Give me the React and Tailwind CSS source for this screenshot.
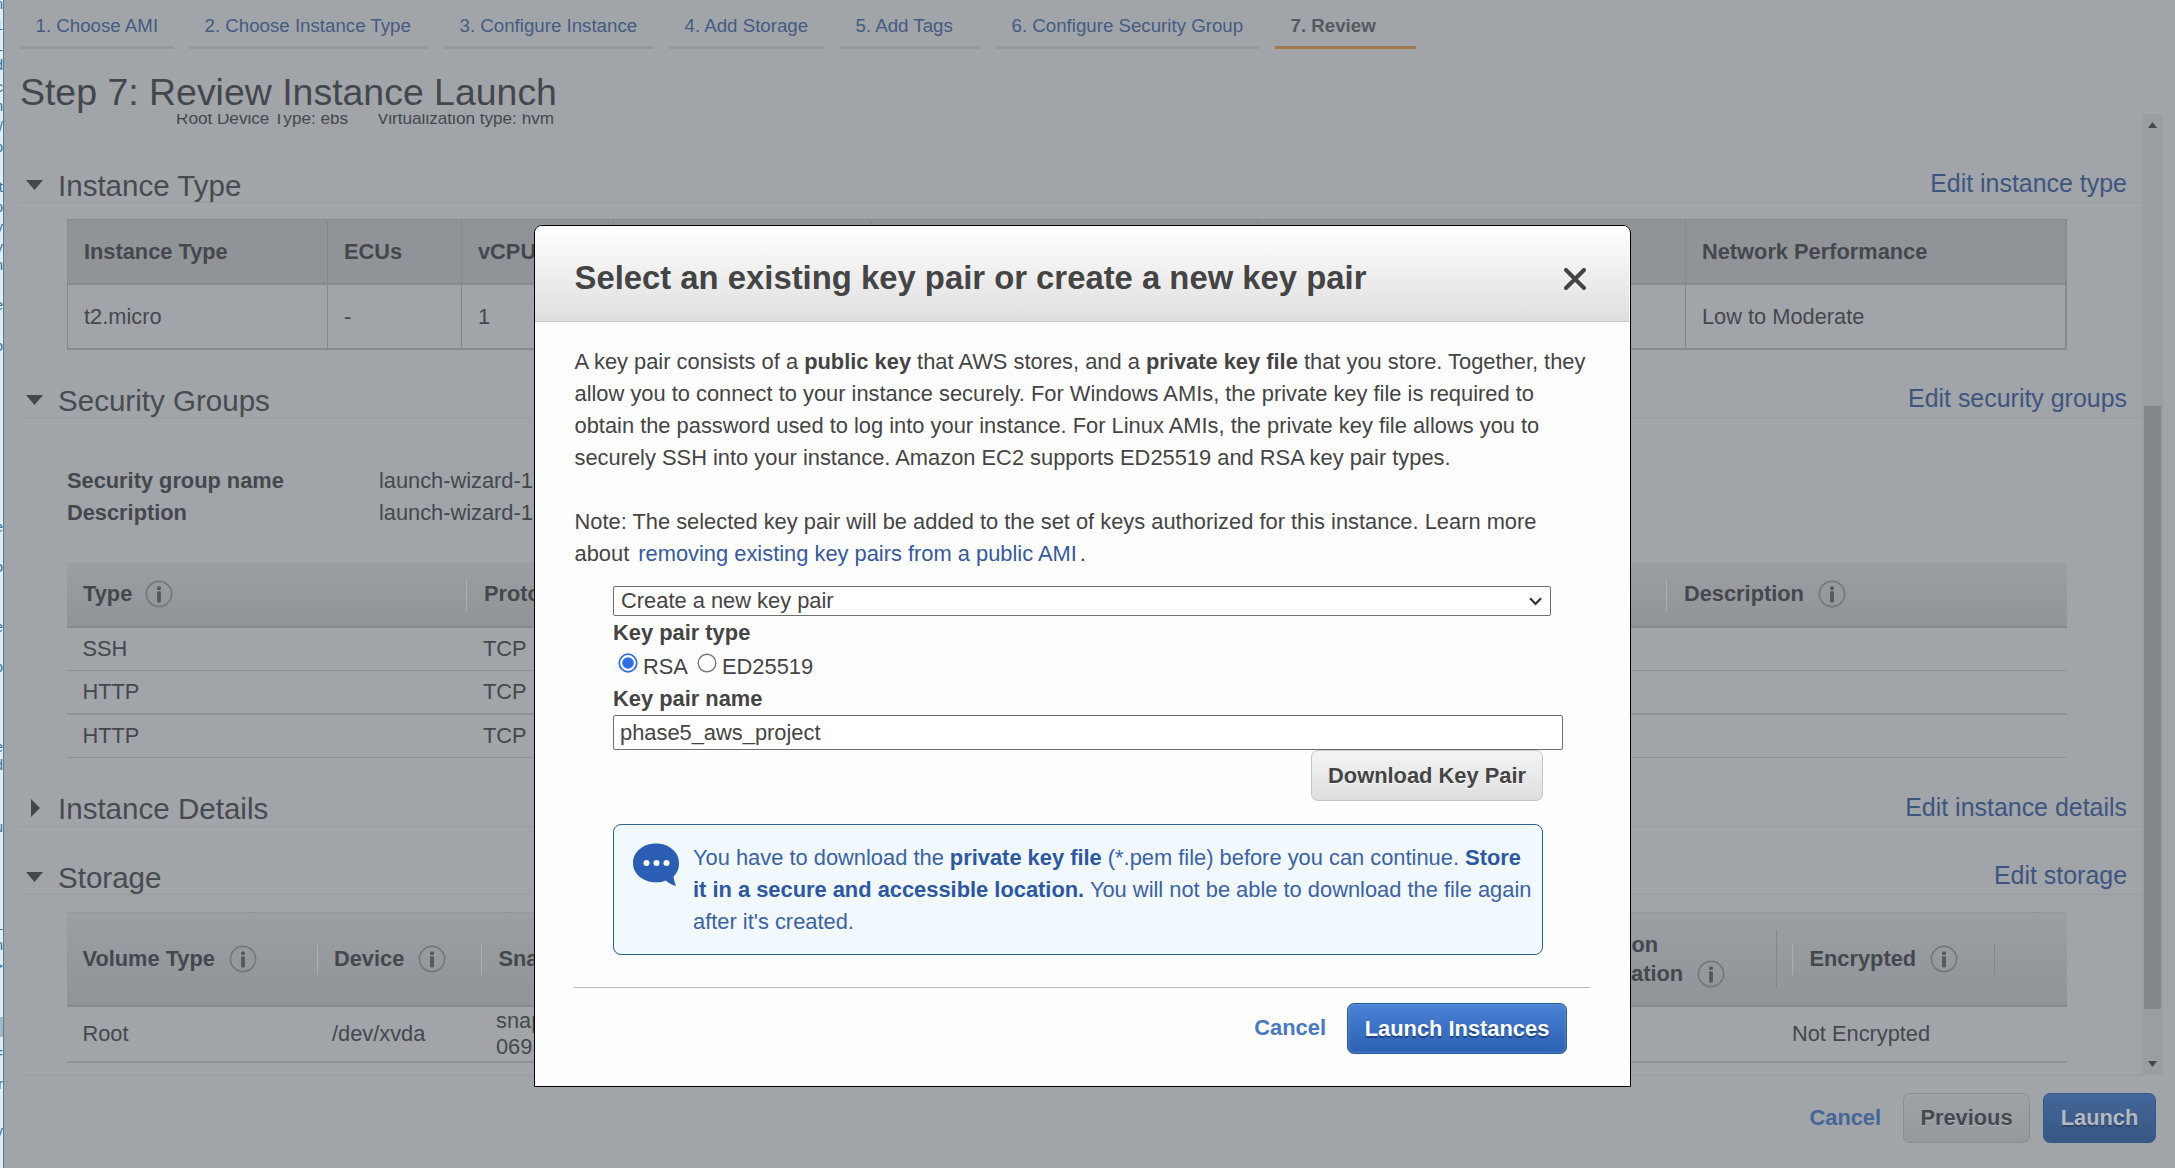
import React from "react";

const TABS = [
  { label: "1. Choose AMI", cls: "w-[154px] mr-[15px]" },
  { label: "2. Choose Instance Type", cls: "w-[239px] mr-[16px]" },
  { label: "3. Configure Instance", cls: "w-[209px] mr-[16px]" },
  { label: "4. Add Storage", cls: "w-[155px] mr-[16px]" },
  { label: "5. Add Tags", cls: "w-[140px] mr-[16px]" },
  { label: "6. Configure Security Group", cls: "w-[263px] mr-[16px]" },
];

const EDGE_MARKS = [
  [4, "n"], [25, "1"], [50, "-"], [65, "d"], [87, "c"], [106, "n"], [127, "/"], [147, "p"],
  [187, "t"], [207, "p"], [227, "y"], [247, "y"], [265, "n"], [305, "e"], [346, "o"],
  [527, "e"], [567, "o"], [627, "e"], [667, "o"], [747, "e"], [765, "d"], [827, "u"],
  [925, "L"], [945, "n"], [966, ">"], [1053, "="], [1084, "r"], [1131, "y"],
];

function EdgeStrip() {
  return (
    <div className="relative h-full w-[4px] shrink-0 overflow-hidden border-r border-[#4a7fb0] bg-[#e3ecef]">
      {EDGE_MARKS.map(([y, ch]) => (
        <span
          key={y}
          className="absolute right-0 text-[15px] leading-[16px] text-[#3f6f8f]"
          style={{ top: y - 8 }}
        >
          {ch}
        </span>
      ))}
      <span className="absolute left-0 top-[1017px] h-[20px] w-[3px] bg-[#a9b6c2]" />
    </div>
  );
}

function Info() {
  return (
    <svg width="28" height="28" viewBox="0 0 28 28" className="block shrink-0">
      <circle cx="14" cy="14" r="12.6" fill="none" stroke="#74777c" strokeWidth="1.6" />
      <rect x="12.1" y="6.4" width="3.8" height="3.6" rx="1" fill="#55595e" />
      <rect x="12.1" y="11.2" width="3.8" height="11.2" rx="0.8" fill="#55595e" />
    </svg>
  );
}

function Caret({ open }) {
  return open ? (
    <svg width="17" height="10" viewBox="0 0 17 10" className="mt-[20px] block">
      <path d="M0 0H17L8.5 10Z" fill="#43474c" />
    </svg>
  ) : (
    <svg width="17" height="18" viewBox="0 0 17 18" className="mt-[15px] block">
      <path d="M5 0L14 9L5 18Z" fill="#43474c" />
    </svg>
  );
}

function Section({ title, edit, open = true }) {
  return (
    <div className="ml-[16px] flex h-[43px] shrink-0 items-start border-b border-[#989ba0] pl-[6px]">
      <Caret open={open} />
      <h2 className={(open ? "mt-2" : "mt-[7px]") + " ml-[15px] text-[29.55px] leading-[35px] text-[#474b50]"}>{title}</h2>
      <span className="ml-auto mr-[15px] mt-2 text-[24.95px] leading-[30px] text-[#3e5580]">{edit}</span>
    </div>
  );
}

function Sep({ dark = false, tall = false }) {
  return (
    <span
      className={
        "w-px shrink-0 " + (tall ? "h-[58px] " : "h-[31px] ") + (dark ? "bg-[#82858a]" : "bg-[#abaeb2]")
      }
    />
  );
}

function InstanceTable() {
  const cols = [
    ["w-[260px]", "Instance Type", "t2.micro"],
    ["w-[134px]", "ECUs", "-"],
    ["w-[152px]", "vCPUs", "1"],
    ["w-[258px]", "", ""],
    ["w-[386px]", "", ""],
    ["w-[428px]", "", ""],
    ["w-[381px]", "Network Performance", "Low to Moderate"],
  ];
  const line = "flex h-[65px] border-b-2 border-[#87898e]";
  return (
    <div className="ml-[63px] mt-[16px] w-[2000px] shrink-0 border-l border-r-2 border-t border-[#87898e]">
      <div className={line + " bg-[#909398] font-bold"}>
        {cols.map(([w, h], i) => (
          <div key={i} className={w + " shrink-0 border-r border-[#85888d] pl-4 leading-[63px] last:border-r-0"}>
            {h}
          </div>
        ))}
      </div>
      <div className={line}>
        {cols.map(([w, , v], i) => (
          <div key={i} className={w + " shrink-0 border-r border-[#85888d] pl-4 leading-[63px] last:border-r-0"}>
            {v}
          </div>
        ))}
      </div>
    </div>
  );
}

const HEAD = "flex items-center border-b-2 border-[#86898e] bg-linear-to-b from-[#9b9ea3] to-[#909398] font-bold";

function SecurityTable() {
  const rows = [
    ["SSH", "border-b h-[43px]"],
    ["HTTP", "border-b-2 h-[44px]"],
    ["HTTP", "border-b h-[43px]"],
  ];
  return (
    <div className="ml-[63px] mt-[33px] w-[2000px] shrink-0">
      <div className={HEAD + " h-[66px]"}>
        <div className="flex w-[399px] items-center gap-[13px] pl-[16px]">Type <Info /></div>
        <Sep />
        <div className="w-[1199px] pl-[17px]">Protocol</div>
        <Sep />
        <div className="flex items-center gap-[14px] pl-[17px]">Description <Info /></div>
      </div>
      {rows.map(([t, cls], i) => (
        <div key={i} className={cls + " flex border-[#8e9196] leading-[42px]"}>
          <div className="w-[400px] pl-[15.5px]">{t}</div>
          <div className="pl-4">TCP</div>
        </div>
      ))}
    </div>
  );
}

function StorageTable() {
  return (
    <div className="ml-[63px] mt-[17px] w-[2000px] shrink-0">
      <div className={HEAD + " h-[95px] border-t border-t-[#94979c]"}>
        <div className="flex w-[250px] items-center gap-[14px] pl-[15.5px]">Volume Type <Info /></div>
        <Sep />
        <div className="flex w-[163px] items-center gap-[13.5px] pl-[16px]">Device <Info /></div>
        <Sep />
        <div className="w-[1061px] pl-[16.5px]">Snapshot</div>
        <div className="flex w-[233px] items-end gap-[14px] pl-[17px] leading-[29px]">
          <div>Delete on<br />Termination</div>
          <Info />
        </div>
        <Sep dark tall />
        <div className="w-[15px]" />
        <Sep />
        <div className="flex w-[201px] items-center gap-[14px] pl-[16.5px]">Encrypted <Info /></div>
        <Sep dark />
      </div>
      <div className="flex h-[56px] items-center border-b-2 border-[#8e9196]">
        <div className="w-[265px] pl-[15.5px]">Root</div>
        <div className="w-[164px]">/dev/xvda</div>
        <div className="w-[1296px] leading-[26.5px]">snap-<br />069</div>
        <div>Not Encrypted</div>
      </div>
    </div>
  );
}

function Scrollbar() {
  return (
    <div className="flex w-[21px] shrink-0 flex-col items-center bg-[#9a9da2]">
      <svg width="9" height="6" viewBox="0 0 9 6" className="mt-[8px] block"><path d="M0 6L4.5 0L9 6Z" fill="#45494e" /></svg>
      <div className="mt-[278px] h-[603px] w-[17px] bg-[#83868b]" />
      <svg width="9" height="6" viewBox="0 0 9 6" className="mt-[52px] block"><path d="M0 0H9L4.5 6Z" fill="#45494e" /></svg>
    </div>
  );
}

function Page() {
  return (
    <div className="flex min-w-0 flex-1 flex-col bg-[#a1a4a9] text-[21.8px] text-[#44484d]">
      <nav className="flex h-[49px] shrink-0 pl-[16px] text-[18.7px]">
        {TABS.map((t) => (
          <div
            key={t.label}
            className={t.cls + " shrink-0 whitespace-nowrap border-b-[3px] border-[#95989d] pl-[15.5px] pt-[5px] leading-[41px] text-[#465b82]"}
          >
            {t.label}
          </div>
        ))}
        <div className="w-[141px] border-b-[3px] border-[#a07a4c] pl-[15.5px] pt-[5px] font-bold leading-[41px] text-[#55595e]">
          7. Review
        </div>
      </nav>
      <div className="h-[65px] shrink-0 pl-[16px] pt-[22px]">
        <h1 className="text-[37.45px] leading-[42px] text-[#43474c]">Step 7: Review Instance Launch</h1>
      </div>
      <div className="flex h-[961px] shrink-0 overflow-hidden">
        <div className="flex w-[2138px] shrink-0 flex-col">
          <div className="-mt-[7px] flex h-[23px] shrink-0 gap-[29px] pl-[172px] text-[17.15px] leading-[23px]">
            <span>Root Device Type: ebs</span>
            <span>Virtualization type: hvm</span>
          </div>
          <div className="h-[30px] shrink-0" />
          <Section title="Instance Type" edit="Edit instance type" />
          <InstanceTable />
          <div className="h-[25px] shrink-0" />
          <Section title="Security Groups" edit="Edit security groups" />
          <div className="mt-[47px] grid shrink-0 grid-cols-[312px_1fr] pl-[63px] leading-[32px]">
            <b>Security group name</b>
            <span>launch-wizard-1</span>
            <b>Description</b>
            <span>launch-wizard-1</span>
          </div>
          <SecurityTable />
          <div className="h-[26px] shrink-0" />
          <Section title="Instance Details" edit="Edit instance details" open={false} />
          <div className="h-[25px] shrink-0" />
          <Section title="Storage" edit="Edit storage" />
          <StorageTable />
        </div>
        <Scrollbar />
      </div>
      <div className="ml-[16px] h-px w-[2123px] shrink-0 bg-[#989ba0]" />
      <div className="flex justify-end pr-[19px] pt-[17px] font-bold leading-[48px]">
        <span className="mr-[22px] leading-[49px] text-[#456798]">Cancel</span>
        <span className="mr-[13px] h-[50px] w-[127px] rounded-[7px] border border-[#898c91] bg-linear-to-b from-[#9fa2a7] to-[#95989d] text-center [text-shadow:0_1px_0_#b0b3b7]">
          Previous
        </span>
        <span className="h-[50px] w-[113px] rounded-[7px] border border-[#35588a] bg-linear-to-b from-[#436799] to-[#385785] text-center text-[#b4b9c0] [text-shadow:0_2px_1px_#2c4468]">
          Launch
        </span>
      </div>
    </div>
  );
}

function Radio({ checked = false }) {
  return (
    <svg width="20" height="20" viewBox="0 0 20 20" className="mt-px block shrink-0">
      <circle cx="10" cy="10" r="8.8" fill="#fff" stroke={checked ? "#2f6fe4" : "#767676"} strokeWidth={checked ? 1.7 : 1.4} />
      {checked && <circle cx="10" cy="10" r="5.8" fill="#2f6fe4" />}
    </svg>
  );
}

function Modal() {
  return (
    <div className="absolute left-[534px] top-[225px] flex h-[862px] w-[1097px] flex-col overflow-hidden rounded-t-[8px] border border-black bg-[#fefefe] text-[21.87px] leading-[32px] text-[#444]">
      <div className="mr-px flex h-[96px] shrink-0 items-center justify-between border-b border-[#c8c8c8] bg-linear-to-b from-white to-[#dfdfdf] pl-[39.5px] pr-[43px]">
        <h3 className="mt-[8px] whitespace-nowrap text-[32.83px] font-bold leading-[40px]">
          Select an existing key pair or create a new key pair
        </h3>
        <svg width="22" height="22" viewBox="0 0 22 22" className="mt-[11px] block">
          <path d="M2 2L20 20M20 2L2 20" stroke="#444" strokeWidth="4" strokeLinecap="round" />
        </svg>
      </div>
      <div className="ml-[39.5px] mt-[24px] whitespace-nowrap">
        <p>A key pair consists of a <b>public key</b> that AWS stores, and a <b>private key file</b> that you store. Together, they</p>
        <p>allow you to connect to your instance securely. For Windows AMIs, the private key file is required to</p>
        <p>obtain the password used to log into your instance. For Linux AMIs, the private key file allows you to</p>
        <p>securely SSH into your instance. Amazon EC2 supports ED25519 and RSA key pair types.</p>
        <p className="mt-[32px]">Note: The selected key pair will be added to the set of keys authorized for this instance. Learn more</p>
        <p>about <span className="ml-[3px] mr-[3px] text-[#3558a0]">removing existing key pairs from a public AMI</span>.</p>
      </div>
      <div className="ml-[78px] flex flex-col">
        <div className="mt-[16px] flex h-[30px] w-[938px] items-center justify-between rounded-[2px] border border-[#6f6f6f] bg-white pl-[7px] pr-[8px] leading-[28px]">
          <span>Create a new key pair</span>
          <svg width="13" height="9" viewBox="0 0 13 9"><path d="M1 1.2L6.5 7L12 1.2" fill="none" stroke="#333" strokeWidth="2.2" /></svg>
        </div>
        <b className="mt-px h-[32px] leading-[32px]">Key pair type</b>
        <div className="flex h-[34px] items-start pl-[4.5px]">
          <span className="mt-[3px]"><Radio checked /></span>
          <span className="ml-[5.5px] mt-[2px] w-[53.5px]">RSA</span>
          <span className="mt-[3px]"><Radio /></span>
          <span className="ml-[5.5px] mt-[2px]">ED25519</span>
        </div>
        <b className="h-[32px] leading-[32px]">Key pair name</b>
        <div className="flex h-[35px] w-[950px] items-center rounded-[2px] border border-[#6f6f6f] bg-white pl-[6px] leading-[33px]">
          phase5_aws_project
        </div>
        <div className="ml-[698px] h-[51px] w-[232px] rounded-[7px] border border-[#c4c4c4] bg-linear-to-b from-[#f4f4f4] to-[#dedede] text-center font-bold leading-[49px] [text-shadow:0_1px_0_#fff]">
          Download Key Pair
        </div>
        <div className="mt-[23px] flex h-[131px] w-[930px] rounded-[8px] border border-[#2f6287] bg-[#f1f8fe] pl-[18px] pt-[17px] text-[#3a62a6]">
          <svg width="48" height="44" viewBox="0 0 48 44" className="mt-px block shrink-0">
            <path d="M24 0.5C37 0.5 47 9 47 20C47 26 45 30 41.5 33.5C42 37 43 40 44 43C40 42 36 40 34 37.5C31 38.8 28 39.3 24 39.3C11 39.3 1 31 1 20C1 9 11 0.5 24 0.5Z" fill="#2c5db4" />
            <circle cx="14.5" cy="20" r="3" fill="#fff" />
            <circle cx="24.5" cy="20" r="3" fill="#fff" />
            <circle cx="34.5" cy="20" r="3" fill="#fff" />
          </svg>
          <div className="ml-[13px] whitespace-nowrap">
            <p>You have to download the <b className="text-[#2c57a3]">private key file</b> (*.pem file) before you can continue. <b className="text-[#2c57a3]">Store</b></p>
            <p><b className="text-[#2c57a3]">it in a secure and accessible location.</b> You will not be able to download the file again</p>
            <p>after it's created.</p>
          </div>
        </div>
      </div>
      <div className="ml-[39px] mt-[32px] h-px w-[1016px] shrink-0 bg-[#b8b8b8]" />
      <div className="mt-[15px] flex justify-end pr-[63px] font-bold leading-[49px]">
        <span className="mr-[21px] text-[#4678c4]">Cancel</span>
        <span className="h-[51px] w-[220px] rounded-[7px] border border-[#2a5a9c] bg-linear-to-b from-[#4a82d6] to-[#2c60b2] text-center text-white shadow-[inset_0_0_2px_1px_rgba(120,165,225,0.45)] [text-shadow:0_2px_1px_#1f4480]">
          Launch Instances
        </span>
      </div>
    </div>
  );
}

export default function App() {
  return (
    <div className="relative flex h-[1168px] w-[2175px] overflow-hidden font-['Liberation_Sans',Arial,sans-serif]">
      <EdgeStrip />
      <Page />
      <Modal />
    </div>
  );
}
